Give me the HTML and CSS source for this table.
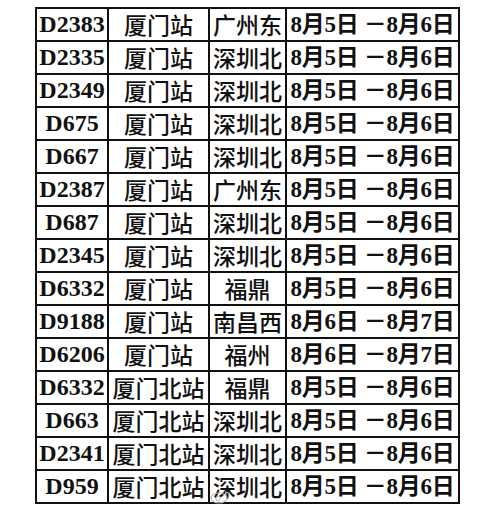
FILE: index.html
```html
<!DOCTYPE html>
<html lang="zh-CN">
<head>
<meta charset="utf-8">
<link rel="stylesheet" href="styles.css">
</head>
<body>
<div class="page">
<table class="schedule">
<colgroup><col class="c1"><col class="c2"><col class="c3"><col class="c4"></colgroup>
<tbody>
<tr><td class="train">D2383</td><td class="st">厦门站</td><td class="st">广州东</td><td class="date">8月5日 －8月6日</td></tr>
<tr><td class="train">D2335</td><td class="st">厦门站</td><td class="st">深圳北</td><td class="date">8月5日 －8月6日</td></tr>
<tr><td class="train">D2349</td><td class="st">厦门站</td><td class="st">深圳北</td><td class="date">8月5日 －8月6日</td></tr>
<tr><td class="train">D675</td><td class="st">厦门站</td><td class="st">深圳北</td><td class="date">8月5日 －8月6日</td></tr>
<tr><td class="train">D667</td><td class="st">厦门站</td><td class="st">深圳北</td><td class="date">8月5日 －8月6日</td></tr>
<tr><td class="train">D2387</td><td class="st">厦门站</td><td class="st">广州东</td><td class="date">8月5日 －8月6日</td></tr>
<tr><td class="train">D687</td><td class="st">厦门站</td><td class="st">深圳北</td><td class="date">8月5日 －8月6日</td></tr>
<tr><td class="train">D2345</td><td class="st">厦门站</td><td class="st">深圳北</td><td class="date">8月5日 －8月6日</td></tr>
<tr><td class="train">D6332</td><td class="st">厦门站</td><td class="st">福鼎</td><td class="date">8月5日 －8月6日</td></tr>
<tr><td class="train">D9188</td><td class="st">厦门站</td><td class="st">南昌西</td><td class="date">8月6日 －8月7日</td></tr>
<tr><td class="train">D6206</td><td class="st">厦门站</td><td class="st">福州</td><td class="date">8月6日 －8月7日</td></tr>
<tr><td class="train">D6332</td><td class="st">厦门北站</td><td class="st">福鼎</td><td class="date">8月5日 －8月6日</td></tr>
<tr><td class="train">D663</td><td class="st">厦门北站</td><td class="st">深圳北</td><td class="date">8月5日 －8月6日</td></tr>
<tr><td class="train">D2341</td><td class="st">厦门北站</td><td class="st">深圳北</td><td class="date">8月5日 －8月6日</td></tr>
<tr><td class="train">D959</td><td class="st">厦门北站</td><td class="st">深圳北</td><td class="date">8月5日 －8月6日</td></tr>
</tbody>
</table>
<svg class="watermark" width="22" height="14" viewBox="0 0 22 14" aria-hidden="true">
  <ellipse cx="9" cy="8" rx="8" ry="5" fill="none" stroke="#bbb" stroke-width="1.2"/>
  <circle cx="8" cy="8.5" r="2.2" fill="none" stroke="#bbb" stroke-width="1"/>
  <path d="M15 2 A5 5 0 0 1 20 6" fill="none" stroke="#ccc" stroke-width="1"/>
</svg>
</div>
</body>
</html>
```

FILE: styles.css
```css
html, body {
  margin: 0;
  padding: 0;
  background: #ffffff;
}
.page {
  position: relative;
  width: 500px;
  height: 509px;
  padding: 7px 0 0 35px;
  box-sizing: border-box;
}
.schedule {
  border-collapse: collapse;
  table-layout: fixed;
  width: 423px;
  color: #111;
}
.c1 { width: 72px; }
.c2 { width: 101px; }
.c3 { width: 77px; }
.c4 { width: 173px; }
.schedule td {
  border: 2px solid #111;
  height: 31px;
  padding: 0;
  text-align: center;
  vertical-align: middle;
  white-space: nowrap;
  overflow: hidden;
  line-height: 31px;
}
.train {
  font-family: "Liberation Serif", "Noto Sans CJK SC", serif;
  font-weight: 700;
  font-size: 24px;
}
.st {
  font-family: "Noto Sans CJK SC", sans-serif;
  font-weight: 500;
  font-size: 23px;
}
.date {
  font-family: "Liberation Serif", "Noto Sans CJK SC", serif;
  font-weight: 700;
  font-size: 23px;
  letter-spacing: -0.3px;
}
.watermark {
  position: absolute;
  left: 210px;
  top: 490px;
}
```
